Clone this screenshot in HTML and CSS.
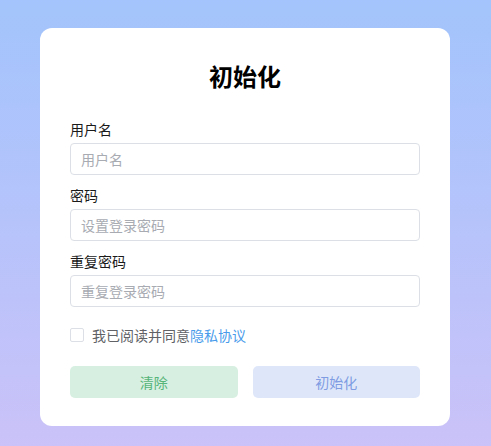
FILE: index.html
```html
<!DOCTYPE html>
<html lang="zh-CN">
<head>
<meta charset="utf-8">
<title>初始化</title>
<link rel="stylesheet" href="styles.css">
</head>
<body>
<div class="card">
  <h1 class="title">初始化</h1>
  <div class="field">
    <label class="label">用户名</label>
    <input class="input" type="text" placeholder="用户名">
  </div>
  <div class="field">
    <label class="label">密码</label>
    <input class="input" type="password" placeholder="设置登录密码">
  </div>
  <div class="field last">
    <label class="label">重复密码</label>
    <input class="input" type="password" placeholder="重复登录密码">
  </div>
  <div class="agree">
    <span class="checkbox"></span>
    <span class="agree-text">我已阅读并同意<a class="link">隐私协议</a></span>
  </div>
  <div class="actions">
    <button class="btn btn-clear">清除</button>
    <button class="btn btn-init">初始化</button>
  </div>
</div>
</body>
</html>
```
FILE: styles.css
```css
html, body {
  margin: 0;
  padding: 0;
}
body {
  width: 491px;
  height: 446px;
  box-sizing: border-box;
  padding: 28px 0 0 40px;
  background: linear-gradient(to bottom, #a3c4fc 0%, #b6c3fb 50%, #cac2f8 100%);
  font-family: "Noto Sans CJK SC", "Noto Sans", sans-serif;
  overflow: hidden;
}
.card {
  width: 410px;
  box-sizing: border-box;
  background: #fff;
  border-radius: 12px;
  padding: 32px 30px 28px;
}
.title {
  margin: 0 0 27px;
  font-size: 24px;
  line-height: 32px;
  font-weight: 700;
  text-align: center;
  color: #000;
}
.field {
  display: flex;
  flex-direction: column;
  margin-bottom: 10px;
}
.field.last {
  margin-bottom: 0;
}
.label {
  font-size: 14px;
  line-height: 20px;
  color: #1a1a1a;
  margin-bottom: 4px;
}
.input {
  height: 32px;
  box-sizing: border-box;
  border: 1px solid #dcdfe6;
  border-radius: 4px;
  padding: 0 10px;
  font-family: inherit;
  font-size: 14px;
  color: #303133;
  outline: none;
  background: #fff;
}
.input::placeholder {
  color: #a8abb2;
}
.agree {
  margin-top: 18px;
  display: flex;
  align-items: center;
  gap: 8px;
  height: 20px;
}
.checkbox {
  width: 14px;
  height: 14px;
  box-sizing: border-box;
  border: 1px solid #dcdfe6;
  border-radius: 2px;
  background: #fff;
}
.agree-text {
  font-size: 14px;
  line-height: 20px;
  color: #606266;
}
.link {
  color: #4a9ceb;
}
.actions {
  margin-top: 21px;
  display: flex;
  gap: 15px;
}
.btn {
  flex: 1;
  height: 32px;
  border: none;
  border-radius: 5px;
  font-family: inherit;
  font-size: 14px;
  cursor: pointer;
}
.btn-clear {
  background: #d7efe1;
  color: #55b478;
}
.btn-init {
  background: #dee7f9;
  color: #7f9ce3;
}
```
